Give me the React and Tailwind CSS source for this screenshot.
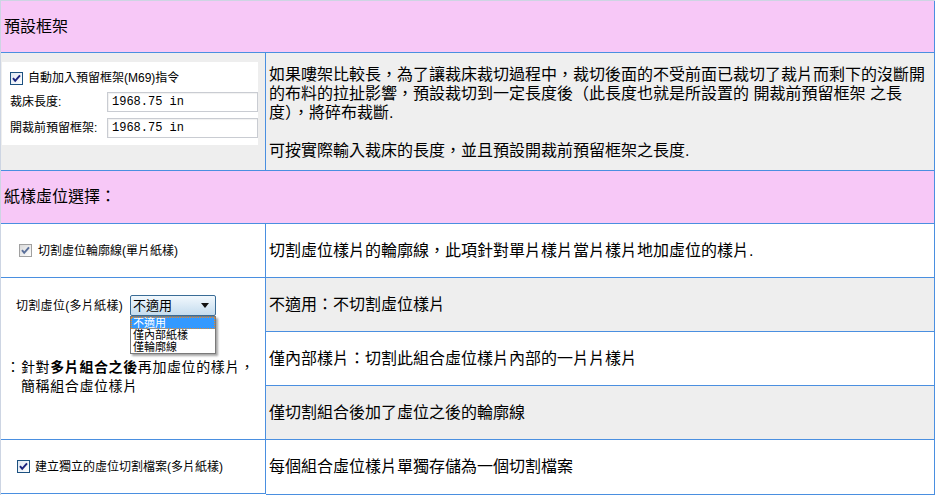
import React from 'react';

const font = { fontFamily: '"Liberation Sans", "Noto Sans CJK TC", sans-serif' };

// 小方框勾選，disabled 時顯示灰色
function Check({ disabled = false }) {
  const edge = disabled ? '#a0a0a0' : '#1c5180';
  const mark = disabled ? '#5a6f9a' : '#1a237e';
  return (
    <svg width="13" height="13" viewBox="0 0 13 13" className="shrink-0">
      <defs>
        <linearGradient id={disabled ? 'cbg-d' : 'cbg'} x1="0" y1="0" x2="1" y2="1">
          <stop offset="0" stopColor={disabled ? '#d8d8d8' : '#dde6f2'} />
          <stop offset="1" stopColor="#ffffff" />
        </linearGradient>
      </defs>
      <rect x="0.5" y="0.5" width="12" height="12" fill={`url(#${disabled ? 'cbg-d' : 'cbg'})`} stroke={edge} />
      <path d="M3 6.2 L5.2 8.8 L10 3.4" fill="none" stroke={mark} strokeWidth="2" />
    </svg>
  );
}

function TextInput({ value }) {
  return (
    <div className="w-[151px] h-[20px] border border-[#c9ccd2] bg-white flex items-center pl-[4px] text-[12px] shadow-[inset_1px_1px_1px_rgba(0,0,0,0.06)]"
      style={{ fontFamily: '"Liberation Mono", "Noto Sans CJK TC", monospace' }}>
      {value}
    </div>
  );
}

// 多片紙樣虛位下拉選單（展開狀態）
function ComboOpen() {
  return (
    <div className="relative">
      <div className="w-[86px] h-[21px] border border-[#3a6c96] rounded-[2px] bg-gradient-to-b from-[#f2f8fd] to-[#c4dcee] flex items-center justify-between pl-[2px] pr-[6px] text-[13px]">
        <span className="leading-none">不適用</span>
        <svg width="8" height="5" viewBox="0 0 8 5"><path d="M0 0 H8 L4 5 Z" fill="#111" /></svg>
      </div>
      <div className="absolute left-0 top-[21px] w-[86px] border border-[#7a7a7a] bg-white shadow-[2px_2px_2px_rgba(0,0,0,0.35)] text-[11px] z-10">
        <div className="h-[12px] leading-[10px] bg-[#3399ff] text-white border border-dotted border-[#e08a30] pl-[1px]">不適用</div>
        <div className="h-[12px] leading-[12px] pl-[2px]">僅內部紙樣</div>
        <div className="h-[12px] leading-[12px] pl-[2px]">僅輪廓線</div>
      </div>
    </div>
  );
}

function SectionHeader({ title, h }) {
  return (
    <div className={`${h} bg-[#f7c8f7] border-b border-[#4a8fe0] flex items-center pl-[3px] text-[16px] text-black`}>
      {title}
    </div>
  );
}

function DescCell({ children, gray = false, last = false }) {
  return (
    <div className={`h-[54px] flex items-center pl-[3px] text-[16px] ${last ? '' : 'border-b border-[#4a8fe0]'} ${gray ? 'bg-[#eeeeee]' : 'bg-white'}`}>
      {children}
    </div>
  );
}

export default function App() {
  return (
    <div className="w-[935px] h-[495px] bg-white border-l border-t border-[#cdd5e3] text-black overflow-hidden" style={font}>
      <div className="border-r border-[#4a8fe0]">
        <SectionHeader title="預設框架" h="h-[52px]" />

        {/* 預留框架設定 */}
        <div className="flex h-[118px] border-b border-[#4a8fe0]">
          <div className="w-[265px] bg-[#eeeeee] pt-[9px] pl-[1px] border-r border-[#4a8fe0]">
            <div className="w-[256px] h-[83px] bg-white pl-[8px] pt-[9px] text-[12px]">
              <div className="flex items-center gap-[5px] h-[14px]">
                <Check />
                <span>自動加入預留框架(M69)指令</span>
              </div>
              <div className="flex items-center mt-[7px]">
                <span className="w-[97px]">裁床長度:</span>
                <TextInput value="1968.75 in" />
              </div>
              <div className="flex items-center mt-[6px]">
                <span className="w-[97px]">開裁前預留框架:</span>
                <TextInput value="1968.75 in" />
              </div>
            </div>
          </div>
          <div className="flex-1 bg-[#efefef] pl-[3px] pt-[12px] text-[16px] leading-[19px]">
            <p>
              如果嘍架比較長，為了讓裁床裁切過程中，裁切後面的不受前面已裁切了裁片而剩下的沒斷開<br />
              的布料的拉扯影響，預設裁切到一定長度後（此長度也就是所設置的 開裁前預留框架 之長<br />
              度），將碎布裁斷.
            </p>
            <p className="mt-[19px]">可按實際輸入裁床的長度，並且預設開裁前預留框架之長度.</p>
          </div>
        </div>

        <SectionHeader title="紙樣虛位選擇：" h="h-[53px]" />

        {/* 單片紙樣 */}
        <div className="flex">
          <div className="w-[265px] border-r border-b border-[#4a8fe0] h-[54px] flex items-center gap-[6px] pl-[18px] text-[12px]">
            <Check disabled />
            <span>切割虛位輪廓線(單片紙樣)</span>
          </div>
          <div className="flex-1">
            <DescCell>切割虛位樣片的輪廓線，此項針對單片樣片當片樣片地加虛位的樣片.</DescCell>
          </div>
        </div>

        {/* 多片紙樣 */}
        <div className="flex">
          <div className="w-[265px] border-r border-b border-[#4a8fe0] h-[162px] pt-[17px]">
            <div className="flex items-center pl-[15px] text-[12px]">
              <span className="w-[114px] tracking-[0.3px]">切割虛位(多片紙樣)</span>
              <ComboOpen />
            </div>
            <div className="mt-[42px] pl-[5px] text-[14px] tracking-[0.6px] leading-[19px]">
              <div className="flex">
                <span className="w-[15px]">：</span>
                <span>針對</span>
                <b>多片組合之後</b>
                <span>再加虛位的樣片，</span>
              </div>
              <div className="pl-[15px]">簡稱組合虛位樣片</div>
            </div>
          </div>
          <div className="flex-1">
            <DescCell gray>不適用：不切割虛位樣片</DescCell>
            <DescCell>僅內部樣片：切割此組合虛位樣片內部的一片片樣片</DescCell>
            <DescCell gray>僅切割組合後加了虛位之後的輪廓線</DescCell>
          </div>
        </div>

        {/* 獨立檔案 */}
        <div className="flex">
          <div className="w-[265px] border-r border-b border-[#4a8fe0] h-[54px] flex items-center gap-[5px] pl-[16px] text-[12px]">
            <Check />
            <span>建立獨立的虛位切割檔案(多片紙樣)</span>
          </div>
          <div className="flex-1 border-b border-[#4a8fe0]">
            <DescCell last>每個組合虛位樣片單獨存儲為一個切割檔案</DescCell>
          </div>
        </div>
      </div>
    </div>
  );
}
